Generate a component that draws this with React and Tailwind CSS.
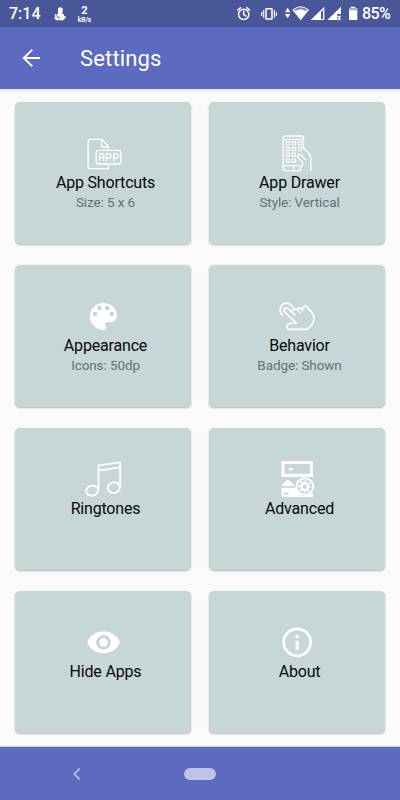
import React from "react";

const AppShortcutsIcon = () => (
  <g fill="none" stroke="white" strokeWidth="4" strokeLinejoin="round" strokeLinecap="round">
    <path d="M62 131H43Q38 131 38 126V48Q38 43 43 43H78L99 64V73M99 119V131H66" />
    <path d="M78 43V60Q78 66 84 66H99" />
    <rect x="62" y="76" width="74" height="41" rx="8" />
    <path strokeLinecap="square" d="M72 106V91Q72 86 77 86H79Q85 86 85 91V106M72 98H85M93 107V86H101Q106 86 106 92T101 99H94M115 107V86H122Q128 86 128 92T122 99H116" />
  </g>
);

const AppDrawerIcon = () => (
  <g fill="none" stroke="white" strokeWidth="4" strokeLinejoin="round" strokeLinecap="round">
    <path d="M99 72V40Q99 33 92 33H45Q38 33 38 40V130Q38 137 45 137H90" />
    <path d="M39 43H98M39 122H86" />
    {[50, 67, 84].map((y) =>
      [47, 65, 83].map((x) => (x === 83 && y === 84 ? null : <rect key={`${x}-${y}`} x={x} y={y} width="10" height="10" strokeWidth="3.6" />))
    )}
    <rect x="47" y="102" width="10" height="10" strokeWidth="3.6" />
    <rect x="65" y="102" width="10" height="10" strokeWidth="3.6" />
    <circle cx="69" cy="129" r="1" />
    <path d="M90 137V127L96 121V112L84 99Q79 90 87 88Q92 87 107 106" />
    <path d="M101 72L113 82Q121 91 121 99V137" />
  </g>
);

const PaletteIcon = () => (
  <path
    fill="white"
    fillRule="evenodd"
    d="M84 39C61 39 43 57 43 79S61 120 84 120C90 120 92 115 91 111C90 108 88 106 88 103C88 99 91 97 95 97H103C116 97 124 89 124 76C124 55 106 39 84 39ZM59 65A7 7 0 1 1 59 79A7 7 0 1 1 59 65ZM72 47A7 7 0 1 1 72 61A7 7 0 1 1 72 47ZM95 47A7 7 0 1 1 95 61A7 7 0 1 1 95 47ZM109 65A7 7 0 1 1 109 79A7 7 0 1 1 109 65Z"
  />
);

const TapIcon = () => (
  <g fill="none" stroke="white" strokeWidth="5" strokeLinejoin="round" strokeLinecap="round">
    <path d="M36 75A20 20 0 1 1 67 52" />
    <path d="M78 99L44 68C36 59 44 50 53 56L73 74M67 61C71 55 77 56 81 60L89 68M80 59C84 51 91 54 97 62M95 57C99 46 104 47 110 53L122 65Q132 76 130 88Q128 103 116 113Q111 118 103 118H53C46 114 48 103 56 101L78 99" />
  </g>
);

const MusicIcon = () => (
  <g fill="none" stroke="white" strokeWidth="5.5" strokeLinejoin="round">
    <path d="M69 121V46L134 37V110M69 62L134 52" />
    <ellipse cx="50" cy="122" rx="18" ry="15" transform="rotate(-15 50 122)" />
    <ellipse cx="115" cy="113" rx="18" ry="16" transform="rotate(-15 115 113)" />
  </g>
);

const AdvancedIcon = () => (
  <g fill="white">
    <path fillRule="evenodd" d="M33 33H127V81H33ZM42 42V71H118V42Z" />
    <path d="M54 54H67V61H54Z" />
    <path d="M32 108L52 88L74 108Z" />
    <path fillRule="evenodd" d="M33 113H76Q82 135 103 139H128V141H33ZM40 128V134H54V128Z" />
    <path d="M118 131H128V141H100Z" />
    <circle cx="103" cy="110" r="25" fill="none" stroke="white" strokeWidth="6" />
    <g fill="none" stroke="white">
      <circle cx="103" cy="110" r="10" strokeWidth="7" />
      <circle cx="103" cy="110" r="16" strokeWidth="6" strokeDasharray="6.28 6.28" strokeDashoffset="3.14" />
    </g>
  </g>
);

const EyeIcon = () => (
  <path
    fill="white"
    fillRule="evenodd"
    d="M84 49C62 49 43 61 35 82C43 103 62 115 84 115S125 103 133 82C125 61 106 49 84 49ZM84 60A22 22 0 1 1 84 104A22 22 0 1 1 84 60ZM84 69A13 13 0 1 0 84 95A13 13 0 1 0 84 69Z"
  />
);

const InfoIcon = () => (
  <g>
    <circle cx="80" cy="82" r="40.5" fill="none" stroke="white" strokeWidth="8" />
    <path fill="white" d="M75 60H85V69H75ZM75 77H85V105H75Z" />
  </g>
);

const cards = [
  { title: "App Shortcuts", sub: "Size: 5 x 6", Icon: AppShortcutsIcon, box: "1.5 0 180 150" },
  { title: "App Drawer", sub: "Style: Vertical", Icon: AppDrawerIcon, box: "-1.5 0 180 150" },
  { title: "Appearance", sub: "Icons: 50dp", Icon: PaletteIcon, box: "1.5 -6 180 150" },
  { title: "Behavior", sub: "Badge: Shown", Icon: TapIcon, box: "-1.5 -6 180 150" },
  { title: "Ringtones", Icon: MusicIcon, box: "1.5 3 180 150" },
  { title: "Advanced", Icon: AdvancedIcon, box: "-1.5 3 180 150" },
  { title: "Hide Apps", Icon: EyeIcon, box: "1.5 -3 180 150" },
  { title: "About", Icon: InfoIcon, box: "-1.5 -3 180 150" },
];

function StatusBar() {
  return (
    <div className="flex h-[27px] shrink-0 items-center bg-[#495799] pl-[9px] pr-[9px] text-white">
      <span className="w-[45px] text-[16px] font-medium leading-[27px]">7:14</span>
      <svg className="h-[14px] w-3" viewBox="0 0 36 42" fill="white">
        <circle cx="19" cy="8" r="7.5" />
        <path d="M12 13H26L24 19C31 22 31 27 30 29L34 26L36 31L28 40H8C0 37 0 31 4 28L1 20L7 23L12 20Z" />
        <path d="M8 25Q9 32 18 33" fill="none" stroke="#495799" strokeWidth="3" />
      </svg>
      <div className="ml-2.5 flex w-[17px] flex-col items-center pt-px font-bold">
        <span className="text-[11px] leading-[11px]">2</span>
        <span className="text-[6.5px] leading-[8px]">kB/s</span>
      </div>
      <svg className="ml-auto h-[27px] w-[125px]" viewBox="0 0 375 81" fill="white">
        <g fill="none" stroke="white" strokeWidth="4.5">
          <circle cx="20" cy="43" r="15.5" />
          <path d="M20 32V44L28 49M1 31L12 22M28 22L39 31" />
          <rect x="87" y="26" width="18" height="31" rx="1" />
          <path d="M80 30V53M112 30V53M74 36V48M118 36V48" strokeWidth="3.5" />
        </g>
        <path d="M144 37L152 23L160 37ZM144 42H160L152 55Z" />
        <path d="M166 29Q191 8 216 29L191 61Z" />
        <path d="M171 29Q191 15 211 29L207 33Q191 22 175 33Z" fill="#7882b3" />
        <path fillRule="evenodd" d="M221 60L262 20V60ZM252 36V57H258V30Z" />
        <path d="M271 60L312 20V42H300V60Z" />
        <path d="M301 47L311 60M311 47L301 60" stroke="white" strokeWidth="4" />
        <path d="M341 20H355V24H361V60H336V24H341Z" />
        <path d="M336 24H361V31H336Z" fill="#a4abcc" />
      </svg>
      <span className="w-[29px] whitespace-nowrap text-[16px] font-medium leading-[27px] tracking-[-0.6px]">85%</span>
    </div>
  );
}

export default function App() {
  return (
    <div className="flex h-[800px] w-[400px] flex-col overflow-hidden bg-[#fafafa] font-['Roboto',sans-serif]">
      <StatusBar />
      <header className="z-10 flex h-[62px] shrink-0 items-center bg-[#5c6abf] pl-[22px] text-white shadow-[0_1px_3px_rgba(0,0,0,0.15)]">
        <svg className="h-[18px] w-[18px]" viewBox="0 0 54 54" fill="none" stroke="white" strokeWidth="5.5">
          <path d="M54 27H5M31 2L5 27L31 52" />
        </svg>
        <h1 className="ml-[40px] pt-[2px] text-[22px] leading-[30px] tracking-[0.15px]">Settings</h1>
      </header>
      <main className="grid grow grid-cols-[176px_176px] content-start gap-x-[18px] gap-y-[21px] pl-[15px] pt-[13px]">
        {cards.map(({ title, sub, Icon, box }) => (
          <section
            key={title}
            className="flex h-[142px] flex-col items-center rounded-[5px] bg-[#c7d6d6] pl-[5px] pt-[23px] shadow-[0_1px_2px_rgba(0,0,0,0.28)]"
          >
            <svg className="h-[50px] w-[60px] shrink-0" viewBox={box}>
              <Icon />
            </svg>
            <h2 className="-mt-[2px] text-[16px] leading-[19px] tracking-[-0.18px] text-[#080909]">{title}</h2>
            {sub && <p className="text-[13.5px] leading-[20px] tracking-[-0.1px] text-[#667070]">{sub}</p>}
          </section>
        ))}
      </main>
      <nav className="flex h-[54px] shrink-0 items-center border-t border-[#cfd0d6] bg-[#5c6abf] pl-[73px]">
        <svg className="h-3 w-[7px]" viewBox="0 0 21 36" fill="none" stroke="#bec4e6" strokeWidth="5">
          <path d="M20 2L4 18L20 34" />
        </svg>
        <div className="ml-[104px] h-[12px] w-8 rounded-full bg-[#bec4e6]" />
      </nav>
    </div>
  );
}
